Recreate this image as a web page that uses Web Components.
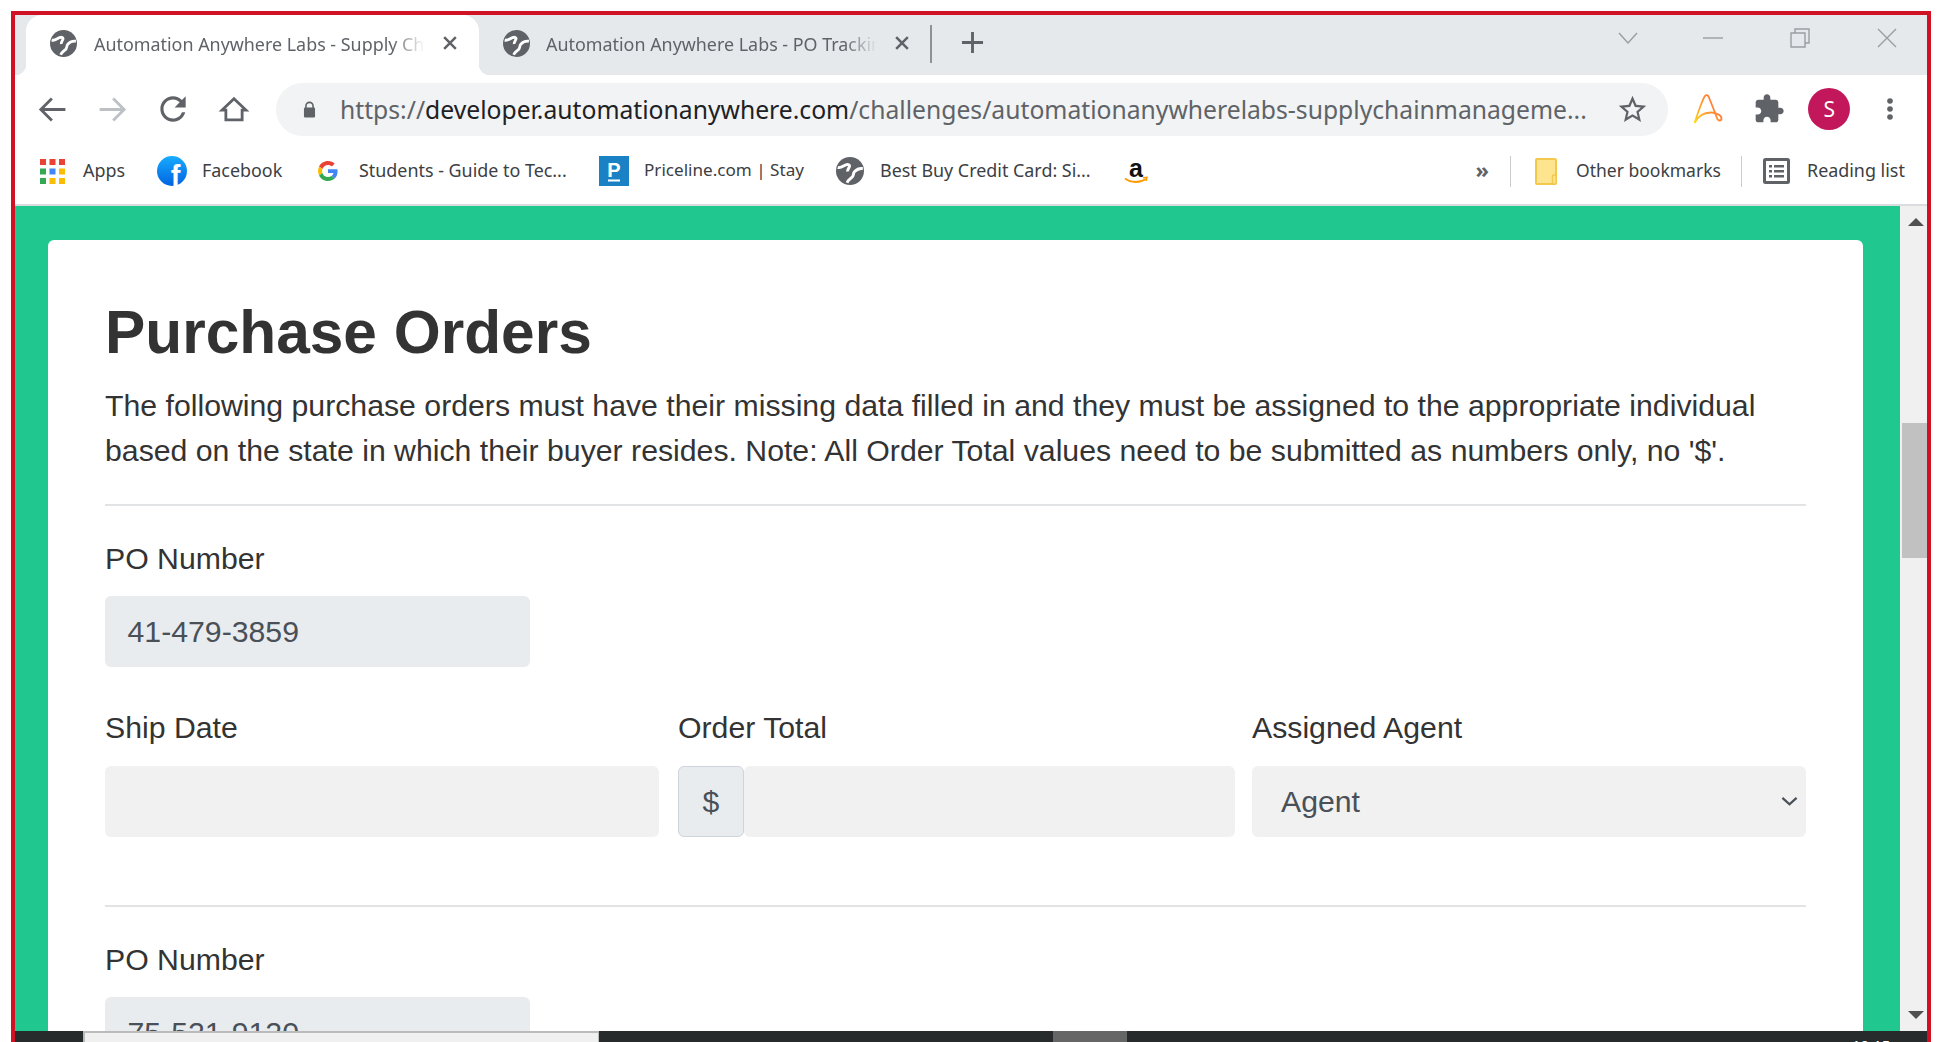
<!DOCTYPE html>
<html>
<head>
<meta charset="utf-8">
<title>Purchase Orders</title>
<style>
    html, body { margin: 0; height: 100%; background: #fff; overflow: hidden; }
</style>
</head>
<body>
<browser-frame>
    <tab-strip slot="tabs">
        <chrome-tab active title="Automation Anywhere Labs - Supply Ch"></chrome-tab>
        <chrome-tab title="Automation Anywhere Labs - PO Trackin"></chrome-tab>
    </tab-strip>
    <tool-bar slot="toolbar"></tool-bar>
    <bookmark-bar slot="bookmarks">
        <book-mark icon="apps" size="25" gap="18" width="117">Apps</book-mark>
        <book-mark icon="facebook" size="30" gap="15" width="161">Facebook</book-mark>
        <book-mark icon="google" size="20" gap="21" width="281">Students - Guide to Tec...</book-mark>
        <book-mark icon="priceline" size="30" gap="15" width="237" style="font-size:17.1px">Priceline.com | Stay</book-mark>
        <book-mark icon="globe" size="28" gap="16" width="287">Best Buy Credit Card: Si...</book-mark>
        <book-mark icon="amazon" size="26" gap="0" width="30"></book-mark>
    </bookmark-bar>
    <purchase-card slot="page">
        <po-section number="41-479-3859">
            <form-field label="Ship Date" style="margin-right:1px"><field-box></field-box></form-field>
            <form-field label="Order Total"><field-box prefix="$"></field-box></form-field>
            <form-field label="Assigned Agent" style="margin-left:-1px"><field-box select>Agent</field-box></form-field>
        </po-section>
        <po-section number="75-521-9120"></po-section>
    </purchase-card>
    <page-scrollbar slot="scrollbar"></page-scrollbar>
    <task-bar slot="taskbar"></task-bar>
</browser-frame>

<script>
const ICONS = {
    globe: `<circle cx="12" cy="12" r="12" fill="#5f6368"/><path d="M1.500 9C5.500 10 7 6 10.500 6.500c3 1-1 3.500-.5 6" fill="none" stroke="#fff" stroke-width="2.500"/><path d="M23 10c-3.500-.5-5.500 1-7 2.500-2 2 0 3.500-3 5.500-1 1-2.500 1.500-3.500 4" fill="none" stroke="#fff" stroke-width="2.500"/>`,
    close: `<path d="M5 5l14 14M19 5L5 19" stroke="#5f6368" stroke-width="3" fill="none"/>`,
    plus: `<path d="M12 1v22M1 12h22" stroke="#5f6368" stroke-width="3" fill="none"/>`,
    back: `<path d="M22 12H3M11.500 3.500L3 12l8.500 8.500" stroke="#5f6368" stroke-width="2.200" fill="none"/>`,
    forward: `<path d="M2 12h19M12.500 3.500L21 12l-8.500 8.500" stroke="#bdc1c6" stroke-width="2.200" fill="none"/>`,
    reload: `<path fill="#5f6368" d="M17.650 6.350C16.200 4.900 14.210 4 12 4c-4.420 0-7.990 3.580-7.990 8s3.570 8 7.990 8c3.730 0 6.840-2.550 7.730-6h-2.080c-.82 2.330-3.040 4-5.650 4-3.310 0-6-2.690-6-6s2.690-6 6-6c1.660 0 3.140.69 4.220 1.780L13 11h7V4l-2.350 2.350z"/>`,
    home: `<path d="M12 2.500L23 13h-3.500v9h-15v-9H1z" fill="none" stroke="#5f6368" stroke-width="2.600"/>`,
    lock: `<path d="M7.500 10V7.500a4.500 4.500 0 019 0V10" fill="none" stroke="#5f6368" stroke-width="2"/><rect x="5" y="9.500" width="14" height="12.500" rx="1.500" fill="#5f6368"/>`,
    star: `<path fill="#5f6368" d="M22 9.240l-7.190-.62L12 2 9.190 8.630 2 9.240l5.460 4.730L5.820 21 12 17.270 18.180 21l-1.630-7.030L22 9.240zM12 15.400l-3.760 2.270 1-4.280-3.320-2.880 4.380-.38L12 6.100l1.710 4.040 4.380.38-3.320 2.880 1 4.280L12 15.400z"/>`,
    automation: `<defs><linearGradient id="ag" x1="0" y1="1" x2="1" y2="0.300"><stop offset="0" stop-color="#ffd91e"/><stop offset=".45" stop-color="#ffa02e"/><stop offset="1" stop-color="#ff6a3c"/></linearGradient></defs><path d="M.5 29C3 22 8 6 11 2c1-1.200 2.500-1.200 3.500.5C17 8 21 19 23 24c1 3.500 4.500 3 4.500.5 0-3.500-5.500-6-10.500-6-7 0-13 3.500-16.500 10.500" fill="none" stroke="url(#ag)" stroke-width="1.800"/>`,
    puzzle: `<path fill="#5f6368" d="M20.500 11H19V7c0-1.100-.9-2-2-2h-4V3.500C13 2.120 11.880 1 10.500 1S8 2.120 8 3.500V5H4c-1.100 0-1.990.9-1.990 2v3.800H3.500c1.490 0 2.700 1.210 2.700 2.700s-1.210 2.700-2.700 2.700H2V20c0 1.100.9 2 2 2h3.800v-1.500c0-1.490 1.210-2.700 2.700-2.700 1.490 0 2.700 1.210 2.700 2.700V22H17c1.100 0 2-.9 2-2v-4h1.500c1.380 0 2.500-1.120 2.500-2.500S21.880 11 20.500 11z"/>`,
    dots: `<circle cx="12" cy="4" r="2.800" fill="#5f6368"/><circle cx="12" cy="12" r="2.800" fill="#5f6368"/><circle cx="12" cy="20" r="2.800" fill="#5f6368"/>`,
    apps: `<g fill="#ea4335"><rect x="0" y="0" width="6" height="6"/><rect x="9.500" y="0" width="6" height="6"/><rect x="19" y="0" width="6" height="6"/></g><rect x="0" y="9.500" width="6" height="6" fill="#34a853"/><rect x="9.500" y="9.500" width="6" height="6" fill="#4285f4"/><rect x="19" y="9.500" width="6" height="6" fill="#fbbc05"/><rect x="0" y="19" width="6" height="6" fill="#34a853"/><rect x="9.500" y="19" width="6" height="6" fill="#fbbc05"/><rect x="19" y="19" width="6" height="6" fill="#fbbc05"/>`,
    facebook: `<defs><linearGradient id="fb" x1="0" y1="0" x2="0" y2="1"><stop offset="0" stop-color="#18acfe"/><stop offset="1" stop-color="#0163e0"/></linearGradient></defs><circle cx="15" cy="15" r="15" fill="url(#fb)"/><text x="18.500" y="30" text-anchor="middle" font-family="Liberation Sans" font-weight="700" font-size="29" fill="#fff">f</text>`,
    google: `<path fill="#EA4335" d="M24 9.500c3.540 0 6.710 1.220 9.210 3.600l6.850-6.850C35.900 2.380 30.470 0 24 0 14.620 0 6.510 5.380 2.560 13.220l7.980 6.190C12.430 13.720 17.740 9.500 24 9.500z"/><path fill="#4285F4" d="M46.980 24.550c0-1.570-.15-3.090-.38-4.550H24v9.020h12.940c-.58 2.960-2.260 5.480-4.780 7.180l7.730 6c4.510-4.180 7.090-10.360 7.090-17.650z"/><path fill="#FBBC05" d="M10.530 28.590c-.48-1.450-.76-2.990-.76-4.590s.27-3.140.76-4.590l-7.980-6.190C.92 16.460 0 20.120 0 24c0 3.880.92 7.540 2.560 10.780l7.970-6.190z"/><path fill="#34A853" d="M24 48c6.480 0 11.930-2.130 15.890-5.810l-7.730-6c-2.150 1.450-4.920 2.300-8.160 2.300-6.260 0-11.570-4.220-13.470-9.910l-7.980 6.190C6.510 42.620 14.620 48 24 48z"/>`,
    priceline: `<rect width="30" height="30" fill="#1a82c4"/><text x="15" y="21" text-anchor="middle" font-family="Liberation Sans" font-weight="700" font-size="20" fill="#fff">P</text><rect x="9" y="23.500" width="12" height="2" fill="#fff"/>`,
    amazon: `<text x="13" y="19" text-anchor="middle" font-family="Liberation Sans" font-weight="700" font-size="25" fill="#111">a</text><path d="M2 20.500c6 4.500 15 4.500 21 .5" fill="none" stroke="#f90" stroke-width="2"/><path d="M20 19.800l4-.5-.8 3.500" fill="none" stroke="#f90" stroke-width="1.400"/>`,
    folder: `<rect x="1" y="1" width="20" height="25" rx="1" fill="#fde58f" stroke="#f2c94c" stroke-width="2"/><rect x="17.500" y="17" width="3.500" height="9" rx="1" fill="#fde58f" stroke="#f2c94c" stroke-width="1.500"/>`,
    list: `<rect x="1.500" y="1.500" width="24" height="23" rx="1" fill="none" stroke="#5f6368" stroke-width="3"/><g fill="#5f6368"><rect x="6" y="7" width="3" height="2.500"/><rect x="11" y="7" width="10" height="2.500"/><rect x="6" y="12" width="3" height="2.500"/><rect x="11" y="12" width="10" height="2.500"/><rect x="6" y="17" width="3" height="2.500"/><rect x="11" y="17" width="10" height="2.500"/></g>`,
    chevron: `<path d="M2 7l10 9 10-9" fill="none" stroke="#495057" stroke-width="3.200"/>`,
};
const VIEWBOX = { automation: '0 0 28 30', facebook: '0 0 30 30', google: '0 0 48 48', priceline: '0 0 30 30', apps: '0 0 25 25', amazon: '0 0 26 26', folder: '0 0 22 27', list: '0 0 27 26' };

class UiIcon extends HTMLElement {
    connectedCallback() {
        const name = this.getAttribute('name');
        const size = this.getAttribute('size') || 24;
        const box = VIEWBOX[name] || '0 0 24 24';
        const [, , w, h] = box.split(' ').map(Number);
        const height = this.getAttribute('height') || size * h / w;
        this.attachShadow({ mode: 'open' }).innerHTML = `
            <style>:host { display: inline-flex; flex: none; } svg { display: block; overflow: visible; }</style>
            <svg width="${size}" height="${height}" viewBox="${box}">${ICONS[name]}</svg>`;
    }
}

class BrowserFrame extends HTMLElement {
    constructor() {
        super();
        this.attachShadow({ mode: 'open' }).innerHTML = `
            <style>
                :host { display: flex; flex-direction: column; height: 1027px; margin: 11px 11px 0; border: solid #d11124; border-width: 4px 4px 0; background: #fff; overflow: hidden; }
                .view { flex: 1; min-height: 0; display: flex; overflow: hidden; }
            </style>
            <slot name="tabs"></slot>
            <slot name="toolbar"></slot>
            <slot name="bookmarks"></slot>
            <div class="view"><slot name="page"></slot><slot name="scrollbar"></slot></div>
            <slot name="taskbar"></slot>`;
    }
}

class TabStrip extends HTMLElement {
    constructor() {
        super();
        this.attachShadow({ mode: 'open' }).innerHTML = `
            <style>
                :host { display: flex; height: 60px; flex: none; padding-left: 11px; background: #e6e9ec; }
                .sep { width: 2px; height: 38px; margin: 10px 0 0 -1px; background: #8d9094; }
                .plus { margin: 16px 0 0 29px; height: 23px; }
                .win { margin-left: auto; display: flex; align-items: center; height: 46px; padding-right: 30px; }
                .win svg { display: block; fill: none; stroke: #9a9da1; stroke-width: 1.400; }
            </style>
            <slot></slot>
            <div class="sep"></div>
            <ui-icon class="plus" name="plus" size="23"></ui-icon>
            <div class="win">
                <svg width="20" height="12" viewBox="0 0 20 12"><path d="M1 1l9 10 9-10"/></svg>
                <svg width="20" height="2" viewBox="0 0 20 2" style="margin-left:65px"><path d="M0 1h20"/></svg>
                <svg width="20" height="20" viewBox="0 0 20 20" style="margin-left:67px"><path d="M1 5h14v14H1zM5 5V1h14v14h-4"/></svg>
                <svg width="20" height="20" viewBox="0 0 20 20" style="margin-left:67px"><path d="M1 1l18 18M19 1L1 19"/></svg>
            </div>`;
    }
}

class ChromeTab extends HTMLElement {
    connectedCallback() {
        this.attachShadow({ mode: 'open' }).innerHTML = `
            <style>
                :host { display: flex; align-items: center; position: relative; flex: none; width: 453px; height: 60px; padding-bottom: 4px; box-sizing: border-box; font: 17.900px "Noto Sans", sans-serif; color: #5f6368; }
                :host([active]) { background: #fff; border-radius: 16px 16px 0 0; }
                :host([active])::before, :host([active])::after { content: ""; position: absolute; bottom: 0; width: 11px; height: 11px; }
                :host([active])::before { left: -11px; background: radial-gradient(circle at 0 0, transparent 11px, #fff 11.500px); }
                :host([active])::after { right: -11px; background: radial-gradient(circle at 100% 0, transparent 11px, #fff 11.500px); }
                :host(:not([active])) { width: 452px; }
                :host(:not([active])) .title { margin-left: 16px; }
                :host(:not([active])) .x { margin-left: 15px; }
                .fav { margin-left: 24px; }
                .title { width: 331px; margin-left: 17px; padding-top: 2px; white-space: nowrap; overflow: hidden; -webkit-mask-image: linear-gradient(to right, #000 90%, transparent); }
                .x { margin-left: 15px; }
            </style>
            <ui-icon class="fav" name="globe" size="27"></ui-icon>
            <div class="title">${this.getAttribute('title')}</div>
            <ui-icon class="x" name="close" size="20"></ui-icon>`;
    }
}

class ToolBar extends HTMLElement {
    constructor() {
        super();
        this.attachShadow({ mode: 'open' }).innerHTML = `
            <style>
                :host { display: flex; align-items: center; flex: none; height: 68px; padding-left: 7px; background: #fff; }
                .btn { display: flex; align-items: center; justify-content: center; width: 60.500px; flex: none; }
                .omni { display: flex; align-items: center; width: 1392px; height: 53px; margin-left: 12px; border-radius: 27px; background: #f1f3f4; flex: none; box-sizing: border-box; padding-left: 24px; font: 24.700px "Noto Sans", sans-serif; color: #5f6368; }
                .url { margin-left: 21px; width: 1250px; flex: none; white-space: nowrap; overflow: hidden; }
                .url b { font-weight: 400; color: #202124; }
                .star { margin-left: 26px; }
                .end { margin-left: 10px; display: flex; }
                .avatar { width: 42px; height: 42px; border-radius: 50%; background: #c2185b; color: #fff; font: 21px "Noto Sans", sans-serif; display: flex; align-items: center; justify-content: center; }
            </style>
            <div class="btn"><ui-icon name="back" size="31"></ui-icon></div>
            <div class="btn"><ui-icon name="forward" size="31"></ui-icon></div>
            <div class="btn"><ui-icon name="reload" size="38"></ui-icon></div>
            <div class="btn"><ui-icon name="home" size="26"></ui-icon></div>
            <div class="omni">
                <ui-icon name="lock" size="19"></ui-icon>
                <div class="url">https://<b>developer.automationanywhere.com</b>/challenges/automationanywherelabs-supplychainmanageme...</div>
                <ui-icon class="star" name="star" size="33"></ui-icon>
            </div>
            <div class="end">
                <div class="btn"><ui-icon name="automation" size="28"></ui-icon></div>
                <div class="btn"><ui-icon name="puzzle" size="32"></ui-icon></div>
                <div class="btn"><div class="avatar">S</div></div>
                <div class="btn"><ui-icon name="dots" size="24" height="26"></ui-icon></div>
            </div>`;
    }
}

class BookmarkBar extends HTMLElement {
    constructor() {
        super();
        this.attachShadow({ mode: 'open' }).innerHTML = `
            <style>
                :host { display: flex; align-items: center; flex: none; height: 56px; padding: 0 24px 5px 25px; border-bottom: 2px solid #dadce0; background: #fff; }
                .right { margin-left: auto; display: flex; align-items: center; }
                .more { font: 700 22px "Noto Sans", sans-serif; color: #5f6368; line-height: 1; margin: 0 21px 4px 0; }
                .sep { width: 1px; height: 31px; background: #c9cbce; flex: none; }
            </style>
            <slot></slot>
            <div class="right">
                <div class="more">»</div>
                <div class="sep" style="margin-right:24px"></div>
                <book-mark icon="folder" size="22" gap="19" width="186" style="font-size:17.5px">Other bookmarks</book-mark>
                <div class="sep" style="margin:0 21px 0 20px"></div>
                <book-mark icon="list" size="27" gap="17" width="140">Reading list</book-mark>
            </div>`;
    }
}

class BookMark extends HTMLElement {
    connectedCallback() {
        const width = this.getAttribute('width');
        this.attachShadow({ mode: 'open' }).innerHTML = `
            <style>
                :host { display: flex; align-items: center; flex: none; width: ${width}px; font: 17.900px "Noto Sans", sans-serif; color: #3c4043; white-space: nowrap; }
                .label { margin-left: ${this.getAttribute('gap')}px; padding-bottom: 3px; }
            </style>
            <ui-icon name="${this.getAttribute('icon')}" size="${this.getAttribute('size')}"></ui-icon>
            <div class="label"><slot></slot></div>`;
    }
}

class PurchaseCard extends HTMLElement {
    constructor() {
        super();
        this.attachShadow({ mode: 'open' }).innerHTML = `
            <style>
                :host { display: block; flex: 1; min-width: 0; box-sizing: border-box; padding: 34px 37px 0 33px; background: #20c78e; font: 30.240px/45px "Liberation Sans", Arial, sans-serif; color: #333; }
                .card { background: #fff; border-radius: 6px; padding: 57px 57px 0; }
                h1 { margin: 0 0 14px; font-size: 60.400px; line-height: 71px; font-weight: 700; padding-bottom: 1px; }
                p { margin: 0 0 31px; }
            </style>
            <div class="card">
                <h1>Purchase Orders</h1>
                <p>The following purchase orders must have their missing data filled in and they must be assigned to the appropriate individual based on the state in which their buyer resides. Note: All Order Total values need to be submitted as numbers only, no '$'.</p>
                <slot></slot>
            </div>`;
    }
}

class PoSection extends HTMLElement {
    connectedCallback() {
        this.attachShadow({ mode: 'open' }).innerHTML = `
            <style>
                :host { display: block; border-top: 2px solid #e2e3e4; padding-top: 30px; padding-bottom: 68px; }
                .top { width: 425px; margin-bottom: 38px; }
                .grid { display: grid; grid-template-columns: 555fr 557fr 553fr; column-gap: 18px; --label-gap: 16px; }
            </style>
            <form-field class="top" label="PO Number"><field-box readonly>${this.getAttribute('number')}</field-box></form-field>
            <div class="grid"><slot></slot></div>`;
    }
}

class FormField extends HTMLElement {
    connectedCallback() {
        this.attachShadow({ mode: 'open' }).innerHTML = `
            <style>
                :host { display: block; }
                label { display: block; margin-bottom: var(--label-gap, 15px); }
            </style>
            <label>${this.getAttribute('label')}</label>
            <slot></slot>`;
    }
}

class FieldBox extends HTMLElement {
    connectedCallback() {
        const prefix = this.getAttribute('prefix');
        const isSelect = this.hasAttribute('select');
        this.attachShadow({ mode: 'open' }).innerHTML = `
            <style>
                :host { display: flex; height: 71px; color: #495057; }
                .addon { flex: none; width: 66px; box-sizing: border-box; display: flex; align-items: center; justify-content: center; background: #e9ecef; border: 1px solid #ced4da; border-radius: 6px; }
                .input { flex: 1; min-width: 0; display: flex; align-items: center; justify-content: space-between; box-sizing: border-box; padding: 0 22.500px; background: #f1f1f1; border-radius: 6px; }
                :host([readonly]) .input { background: #e9ecef; }
                :host([select]) .input { padding: 0 8.500px 0 29px; }
            </style>
            ${prefix ? `<div class="addon">${prefix}</div>` : ''}
            <div class="input"><slot></slot>${isSelect ? '<ui-icon name="chevron" size="17"></ui-icon>' : ''}</div>`;
    }
}

class PageScrollbar extends HTMLElement {
    constructor() {
        super();
        this.attachShadow({ mode: 'open' }).innerHTML = `
            <style>
                :host { display: flex; flex-direction: column; align-items: center; flex: none; width: 27px; box-sizing: border-box; background: #f0f0f0; }
                .up, .down { width: 0; height: 0; margin-left: 5px; border-left: 8px solid transparent; border-right: 8px solid transparent; }
                .up { margin-top: 12px; border-bottom: 8px solid #505050; }
                .thumb { align-self: flex-end; width: 25px; height: 135px; margin-top: 197px; background: #c1c1c1; }
                .down { margin-top: auto; margin-bottom: 12px; border-top: 8px solid #505050; }
            </style>
            <div class="up"></div>
            <div class="thumb"></div>
            <div class="down"></div>`;
    }
}

class TaskBar extends HTMLElement {
    constructor() {
        super();
        this.attachShadow({ mode: 'open' }).innerHTML = `
            <style>
                :host { display: flex; flex: none; height: 11px; overflow: hidden; background: #272b2c; }
                .search { flex: none; width: 516px; margin-left: 68px; box-sizing: border-box; background: #f0f0f0; border-top: 2px solid #bbb; border-left: 2px solid #bbb; border-right: 1px solid #bbb; }
                .active { flex: none; width: 74px; margin-left: 454px; background: #666; }
                .clock { margin-left: 725px; padding-top: 7px; font: 15px/15px "Noto Sans", sans-serif; color: #fff; white-space: nowrap; }
            </style>
            <div class="search"></div>
            <div class="active"></div>
            <div class="clock">10:15</div>`;
    }
}

customElements.define('ui-icon', UiIcon);
customElements.define('browser-frame', BrowserFrame);
customElements.define('tab-strip', TabStrip);
customElements.define('chrome-tab', ChromeTab);
customElements.define('tool-bar', ToolBar);
customElements.define('bookmark-bar', BookmarkBar);
customElements.define('book-mark', BookMark);
customElements.define('purchase-card', PurchaseCard);
customElements.define('po-section', PoSection);
customElements.define('form-field', FormField);
customElements.define('field-box', FieldBox);
customElements.define('page-scrollbar', PageScrollbar);
customElements.define('task-bar', TaskBar);
</script>
</body>
</html>
